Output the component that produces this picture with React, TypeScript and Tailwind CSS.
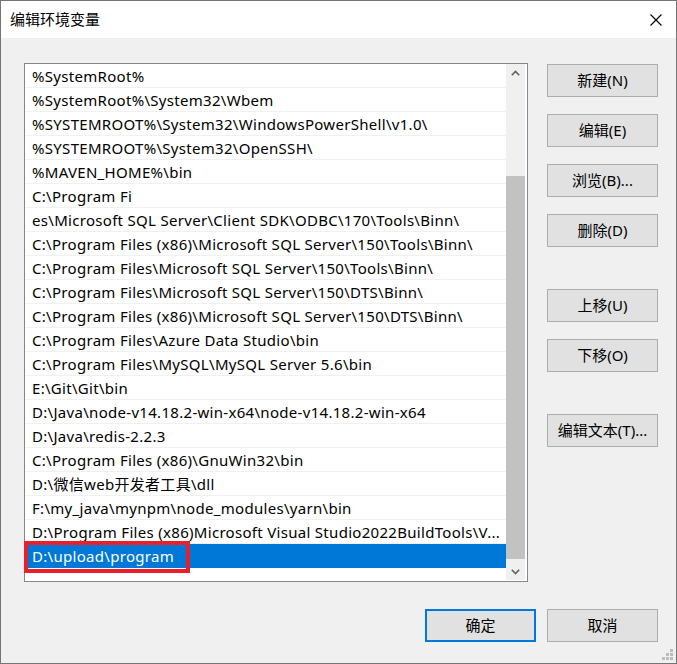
import React from "react";

const rows: string[] = [
  "%SystemRoot%",
  "%SystemRoot%\\System32\\Wbem",
  "%SYSTEMROOT%\\System32\\WindowsPowerShell\\v1.0\\",
  "%SYSTEMROOT%\\System32\\OpenSSH\\",
  "%MAVEN_HOME%\\bin",
  "C:\\Program Fi",
  "es\\Microsoft SQL Server\\Client SDK\\ODBC\\170\\Tools\\Binn\\",
  "C:\\Program Files (x86)\\Microsoft SQL Server\\150\\Tools\\Binn\\",
  "C:\\Program Files\\Microsoft SQL Server\\150\\Tools\\Binn\\",
  "C:\\Program Files\\Microsoft SQL Server\\150\\DTS\\Binn\\",
  "C:\\Program Files (x86)\\Microsoft SQL Server\\150\\DTS\\Binn\\",
  "C:\\Program Files\\Azure Data Studio\\bin",
  "C:\\Program Files\\MySQL\\MySQL Server 5.6\\bin",
  "E:\\Git\\Git\\bin",
  "D:\\Java\\node-v14.18.2-win-x64\\node-v14.18.2-win-x64",
  "D:\\Java\\redis-2.2.3",
  "C:\\Program Files (x86)\\GnuWin32\\bin",
  "D:\\微信web开发者工具\\dll",
  "F:\\my_java\\mynpm\\node_modules\\yarn\\bin",
  "D:\\Program Files (x86)Microsoft Visual Studio2022BuildTools\\V...",
  "D:\\upload\\program",
];

const font = { fontFamily: '"Noto Sans", "Noto Sans CJK SC", sans-serif' };

function Btn({ label, primary }: { label: string; primary?: boolean }) {
  return (
    <div
      className={
        "w-[111px] h-[33px] flex items-center justify-center bg-[#e1e1e1] text-[15px] text-black " +
        (primary ? "border-2 border-[#0078d7]" : "border border-[#adadad]")
      }
    >
      {label}
    </div>
  );
}

function Chevron({ up }: { up?: boolean }) {
  return (
    <svg width="9" height="6" viewBox="0 0 9 6">
      <path
        d={up ? "M0.8 5.2 L4.5 1.5 L8.2 5.2" : "M0.8 0.8 L4.5 4.5 L8.2 0.8"}
        fill="none"
        stroke="#606060"
        strokeWidth="1.6"
      />
    </svg>
  );
}

export default function App() {
  return (
    <div
      className="w-[677px] h-[664px] border border-[#757575] bg-[#f0f0f0] flex flex-col relative"
      style={font}
    >
      {/* Title bar */}
      <div className="h-[37px] bg-white flex items-center justify-between pl-[9px] pr-[14px]">
        <span className="text-[15px] text-black" style={{ fontFamily: '"Noto Sans CJK SC", sans-serif' }}>
          编辑环境变量
        </span>
        <svg width="12" height="12" viewBox="0 0 12 12">
          <path d="M0.5 0.5 L11.5 11.5 M11.5 0.5 L0.5 11.5" stroke="#000" strokeWidth="1.1" />
        </svg>
      </div>

      {/* Body */}
      <div className="flex-1 flex flex-col pl-[23px] pt-[25px] pr-[18px]">
        <div className="flex">
          {/* List box */}
          <div className="relative w-[504px] h-[519px] border border-[#828790] bg-white flex">
            <div className="w-[481px] flex flex-col">
              {rows.map((r, i) => {
                const sel = i === rows.length - 1;
                return (
                  <div
                    key={i}
                    className={
                      "h-[24px] flex items-center pl-[7px] pt-[1px] text-[15px] tracking-[0.3px] whitespace-nowrap overflow-hidden " +
                      (sel
                        ? "bg-[#0078d7] text-white"
                        : "text-black border-b border-[#f0f0f0]")
                    }
                  >
                    {r}
                  </div>
                );
              })}
            </div>
            {/* Scrollbar */}
            <div className="w-[19px] h-[516px] bg-[#f0f0f0] flex flex-col">
              <div className="h-[17px] flex items-center justify-center">
                <Chevron up />
              </div>
              <div className="h-[95px]" />
              <div className="h-[383px] bg-[#c2c2c2]" />
              <div className="flex-1" />
              <div className="h-[17px] flex items-center justify-center">
                <Chevron />
              </div>
            </div>
            {/* Red highlight */}
            <div className="absolute left-[-1px] top-[477px] w-[166px] h-[32px] border-[4px] border-[#e8202b]" />
          </div>

          {/* Buttons */}
          <div className="ml-[19px] pt-[1px] flex flex-col">
            <Btn label="新建(N)" />
            <div className="h-[17px]" />
            <Btn label="编辑(E)" />
            <div className="h-[17px]" />
            <Btn label="浏览(B)..." />
            <div className="h-[17px]" />
            <Btn label="删除(D)" />
            <div className="h-[42px]" />
            <Btn label="上移(U)" />
            <div className="h-[17px]" />
            <Btn label="下移(O)" />
            <div className="h-[42px]" />
            <Btn label="编辑文本(T)..." />
          </div>
        </div>

        <div className="mt-[27px] flex justify-end gap-[11px]">
          <Btn label="确定" primary />
          <Btn label="取消" />
        </div>
      </div>

      {/* Resize grip */}
      <svg className="absolute right-[2px] bottom-[2px]" width="12" height="12" viewBox="0 0 12 12">
        {[
          [8, 0],
          [4, 4],
          [8, 4],
          [0, 8],
          [4, 8],
          [8, 8],
        ].map(([x, y], i) => (
          <rect key={i} x={x} y={y} width="3" height="3" fill="#bdbdbd" />
        ))}
      </svg>
    </div>
  );
}
